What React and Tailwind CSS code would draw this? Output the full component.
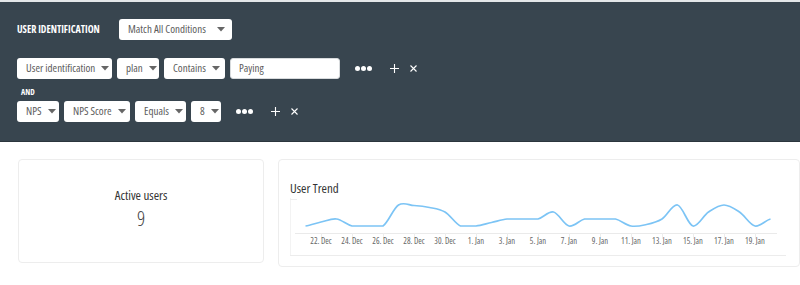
import React from 'react';

const Caret = () => (
  <svg width="8" height="5" viewBox="0 0 8 5" className="shrink-0">
    <path d="M0 0 H8 L4 4.5 Z" fill="#666" />
  </svg>
);

const Select = ({ label, width }) => (
  <div
    className="h-[21px] bg-white rounded-[3px] flex items-center justify-between gap-[6px] pl-[9px] pr-[7px] text-[11px] text-[#5c5c5c]"
    style={{ width }}
  >
    <span className="whitespace-nowrap">{label}</span>
    <Caret />
  </div>
);

const Actions = () => (
  <div className="flex items-center">
    <div className="flex gap-[1px] ml-[10px]">
      <span className="w-[5px] h-[5px] rounded-full bg-white" />
      <span className="w-[5px] h-[5px] rounded-full bg-white" />
      <span className="w-[5px] h-[5px] rounded-full bg-white" />
    </div>
    <svg width="9" height="9" viewBox="0 0 9 9" className="ml-[18px]">
      <path d="M4.5 0 V9 M0 4.5 H9" stroke="#fff" strokeWidth="1.1" />
    </svg>
    <svg width="7" height="7" viewBox="0 0 7 7" className="ml-[11px]">
      <path d="M0.5 0.5 L6.5 6.5 M6.5 0.5 L0.5 6.5" stroke="#fff" strokeWidth="1.1" />
    </svg>
  </div>
);

const days = [
  [305.5, 226], [321, 222], [336.5, 219], [352, 226], [367.5, 226], [383, 226],
  [398.5, 205], [414, 205.5], [429.5, 207.5], [445, 212], [460.5, 226], [476, 226],
  [491.5, 222.5], [507, 219], [522.5, 219], [538, 219], [553.5, 212], [569, 226],
  [584.5, 219], [600, 219], [615.5, 219], [631, 226], [646.5, 224.5], [662, 219],
  [677.5, 205], [693, 226], [708.5, 212], [724, 205], [739.5, 212], [755, 226], [770.5, 219],
];

// spline through the daily points, flat where two neighbours are equal
const linePath = (pts) => {
  let d = `M${pts[0][0]} ${pts[0][1]}`;
  for (let i = 0; i < pts.length - 1; i++) {
    const p0 = pts[i - 1] || pts[i];
    const p1 = pts[i];
    const p2 = pts[i + 1];
    const p3 = pts[i + 2] || p2;
    const t = 0.16;
    let c1y = p1[1] + (p2[1] - p0[1]) * t;
    let c2y = p2[1] - (p3[1] - p1[1]) * t;
    if (p1[1] === p2[1]) { c1y = p1[1]; c2y = p2[1]; }
    d += ` C${p1[0] + 15.5 / 3} ${c1y} ${p2[0] - 15.5 / 3} ${c2y} ${p2[0]} ${p2[1]}`;
  }
  return d;
};

const labels = [
  [321, '22. Dec'], [352, '24. Dec'], [383, '26. Dec'], [414, '28. Dec'], [445, '30. Dec'],
  [476, '1. Jan'], [507, '3. Jan'], [538, '5. Jan'], [569, '7. Jan'], [600, '9. Jan'],
  [631, '11. Jan'], [662, '13. Jan'], [693, '15. Jan'], [724, '17. Jan'], [755, '19. Jan'],
];

const TrendChart = () => (
  <svg width="496" height="62" viewBox="290 197 496 62" className="block">
    <path d="M290.5 198 V256" stroke="#f3f3f3" strokeWidth="1" />
    <path d="M290 199.5 H297" stroke="#eeeeee" strokeWidth="1" />
    <path d="M290 255.5 H786" stroke="#ececec" strokeWidth="1" />
    <path d="M295 233.5 H777" stroke="#eaeaea" strokeWidth="1" />
    {labels.map(([x]) => (
      <path key={x} d={`M${x + 0.5} 233 V239`} stroke="#ededed" strokeWidth="1" />
    ))}
    <path d={linePath(days)} fill="none" stroke="#7cc4f5" strokeWidth="1.7" />
    {labels.map(([x, t]) => (
      <text key={t} x={x} y="244" textAnchor="middle" fontSize="8.5" fill="#666" className="font-stretch-semi-condensed">
        {t}
      </text>
    ))}
  </svg>
);

export default function App() {
  return (
    <div className="w-[800px] h-[285px] bg-white overflow-hidden font-['Open_Sans',sans-serif] font-stretch-condensed">
      <div className="border-t-2 border-[#e4e7e9] bg-[#38454f] border-b border-b-[#2b353d] px-[17px] pt-[17px] pb-[20px]">
        <div className="flex items-center h-[21px]">
          <span className="text-[10px] font-bold text-white w-[102px] whitespace-nowrap">USER IDENTIFICATION</span>
          <Select label="Match All Conditions" width={113} />
        </div>

        <div className="flex items-center mt-[18px] h-[21px] gap-[5px]">
          <Select label="User identification" width={95} />
          <Select label="plan" width={42} />
          <Select label="Contains" width={61} />
          <div className="h-[21px] w-[110px] bg-white rounded-[3px] border border-[#d8dbdd] flex items-center px-[8px] text-[11px] text-[#5c5c5c]">
            Paying
          </div>
          <Actions />
        </div>

        <div className="text-[8px] font-bold text-white leading-[10px] mt-[8px] pl-[4px]">AND</div>

        <div className="flex items-center mt-[4px] h-[20px] gap-[5px]">
          <Select label="NPS" width={42} />
          <Select label="NPS Score" width={66} />
          <Select label="Equals" width={51} />
          <Select label="8" width={30} />
          <Actions />
        </div>
      </div>

      <div className="flex gap-[14px] pl-[18px] pt-[17px]">
        <div className="w-[246px] h-[104px] border border-[#ededed] rounded-[4px] flex flex-col items-center pt-[27px]">
          <div className="text-[13px] leading-[16px] text-[#333]">Active users</div>
          <div className="text-[20px] leading-[24px] text-[#444] font-light mt-[4px]">9</div>
        </div>
        <div className="flex-1 h-[108px] border border-[#ededed] rounded-[4px] pt-[20px] pl-[11px]">
          <div className="text-[13px] leading-[16px] text-[#333]">User Trend</div>
          <div className="mt-[1px]">
            <TrendChart />
          </div>
        </div>
      </div>
    </div>
  );
}
